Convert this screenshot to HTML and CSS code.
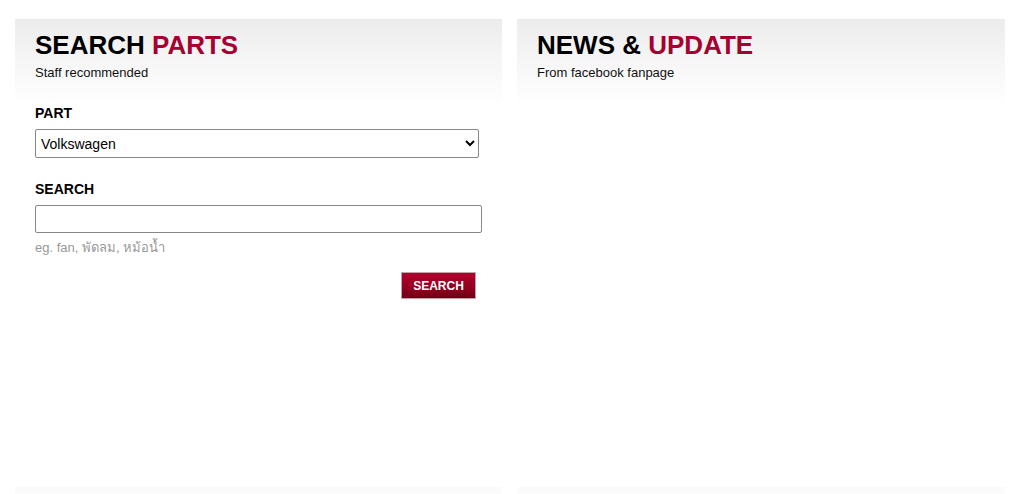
FILE: index.html
```html
<!DOCTYPE html>
<html lang="th">
<head>
    <meta charset="UTF-8">
    <title>Search Parts</title>
    <link rel="stylesheet" href="styles.css">
</head>
<body>

<div class="columns">
    <div class="panel">
        <div class="panel-head">
            <h2>SEARCH <span class="red">PARTS</span></h2>
            <p>Staff recommended</p>
        </div>
        <form class="search-form" onsubmit="return false;">
            <label for="part">PART</label>
            <select id="part" name="part" class="select-part">
                <option>Volkswagen</option>
                <option>Toyota</option>
                <option>Honda</option>
            </select>

            <label for="keyword" class="label-search">SEARCH</label>
            <input type="text" id="keyword" name="keyword" class="input-search">
            <div class="hint">eg. fan, พัดลม, หม้อน้ำ</div>

            <div class="actions">
                <button type="submit">SEARCH</button>
            </div>
        </form>
    </div>

    <div class="panel">
        <div class="panel-head">
            <h2>NEWS &amp; <span class="red">UPDATE</span></h2>
            <p>From facebook fanpage</p>
        </div>
    </div>
</div>

<div class="columns next-row">
    <div class="panel-strip"></div>
    <div class="panel-strip"></div>
</div>

</body>
</html>
```

FILE: styles.css
```css
body {
    font-family: Arial, "Liberation Sans", "Noto Sans", sans-serif;
    background-color: #ffffff;
    color: #000;
    margin: 0;
    padding: 0;
}
.columns {
    display: grid;
    grid-template-columns: 487px 488px;
    column-gap: 15px;
    padding: 19px 19px 0 15px;
}
.panel {
    height: 468px;
    background-color: #ffffff;
}
.panel-head {
    height: 86px;
    box-sizing: border-box;
    padding: 11px 20px 0 20px;
    background: linear-gradient(to bottom, #ececec 0%, #f6f6f6 50%, #ffffff 100%);
}
.panel-head h2 {
    margin: 0;
    font-size: 26px;
    line-height: 30px;
    font-weight: bold;
    color: #000;
}
.red {
    color: #a50030;
}
.panel-head p {
    margin: 5px 0 0 0;
    font-size: 13px;
    line-height: 15px;
    color: #111;
}
.search-form {
    display: flex;
    flex-direction: column;
    padding: 0 21px 0 20px;
}
.search-form label {
    font-size: 14px;
    font-weight: bold;
    line-height: 16px;
    margin-bottom: 8px;
}
.select-part {
    width: 444px;
    height: 29px;
    font-family: Arial, "Liberation Sans", sans-serif;
    font-size: 14px;
    padding: 0 1px;
    border: 1px solid #888;
    border-radius: 2px;
    background-color: #fff;
    color: #000;
}
.label-search {
    margin-top: 23px;
}
.input-search {
    width: 447px;
    height: 28px;
    box-sizing: border-box;
    border: 1px solid #888;
    border-radius: 2px;
    font-size: 14px;
    padding: 0 5px;
}
.hint {
    margin-top: 7px;
    font-size: 13px;
    line-height: 15px;
    color: #999;
}
.actions {
    display: flex;
    justify-content: flex-end;
    padding-right: 5px;
    margin-top: 17px;
}
button {
    background: linear-gradient(to bottom, #b0002f 0%, #92001f 60%, #6e0014 100%);
    color: #fff;
    width: 75px;
    height: 27px;
    padding: 0;
    border: 1px solid #c9a0a8;
    font-family: Arial, "Liberation Sans", sans-serif;
    font-size: 12px;
    font-weight: bold;
    cursor: pointer;
}
button:hover {
    background: #8a0020;
}
.next-row {
    padding-top: 0;
}
.panel-strip {
    height: 20px;
    background: linear-gradient(to bottom, #fafafa, #ffffff);
}
```
